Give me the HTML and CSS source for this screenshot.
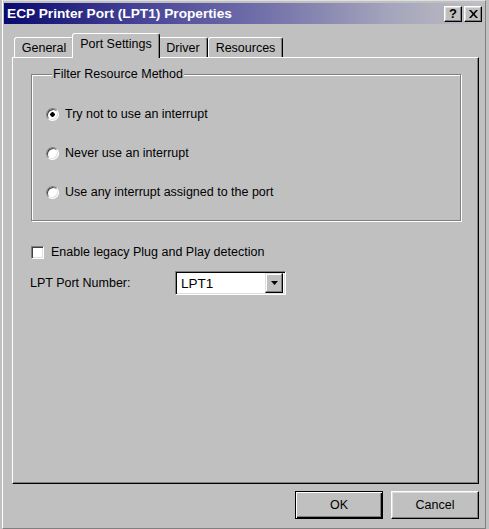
FILE: index.html
```html
<!DOCTYPE html>
<html lang="en">
<head>
    <meta charset="UTF-8">
    <title>ECP Printer Port (LPT1) Properties</title>
    <link rel="stylesheet" href="styles.css">
</head>
<body>
    <div class="window">
        <div class="titlebar">
            <span class="title">ECP Printer Port (LPT1) Properties</span>
            <div class="caption-buttons">
                <span class="caption-btn help">?</span>
                <span class="caption-btn">
                    <svg width="9" height="8" viewBox="0 0 9 8">
                        <path d="M0 0h2l2.5 2.8L7 0h2L5.5 4 9 8H7L4.5 5.2 2 8H0l3.5-4z" fill="#000"/>
                    </svg>
                </span>
            </div>
        </div>

        <div class="dialog">
            <div class="tabs">
                <div class="tab general">General</div>
                <div class="tab active">Port Settings</div>
                <div class="tab driver">Driver</div>
                <div class="tab resources">Resources</div>
            </div>

            <div class="panel">
                <fieldset class="group">
                    <legend>Filter Resource Method</legend>
                    <div class="options">
                        <div class="option"><span class="radio checked"></span>Try not to use an interrupt</div>
                        <div class="option"><span class="radio"></span>Never use an interrupt</div>
                        <div class="option"><span class="radio"></span>Use any interrupt assigned to the port</div>
                    </div>
                </fieldset>

                <div class="check-row"><span class="checkbox"></span>Enable legacy Plug and Play detection</div>

                <div class="port-row">
                    <span class="port-label">LPT Port Number:</span>
                    <div class="combo">
                        <span class="combo-value">LPT1</span>
                        <span class="combo-btn">
                            <svg width="7" height="4" viewBox="0 0 7 4"><path d="M0 0h7L3.5 4z" fill="#000"/></svg>
                        </span>
                    </div>
                </div>
            </div>

            <div class="actions">
                <span class="btn default">OK</span>
                <span class="btn">Cancel</span>
            </div>
        </div>
    </div>
</body>
</html>
```

FILE: styles.css
```css
* {
    margin: 0;
    padding: 0;
    box-sizing: border-box;
}

body {
    width: 489px;
    height: 529px;
    overflow: hidden;
    background: #c0c0c0;
    font-family: 'Liberation Sans', Arial, sans-serif;
    font-size: 12.5px;
    color: #000;
}

/* window frame */
.window {
    margin-left: 2px;
    width: 484px;
    height: 529px;
    padding: 2px 1px 0;
    border-top: 1px solid #dfdfdf;
    border-left: 1px solid #fff;
    border-right: 1px solid #808080;
    border-bottom: 1px solid #808080;
    background: #c0c0c0;
}

.titlebar {
    height: 21px;
    display: flex;
    align-items: center;
    justify-content: space-between;
    padding: 0 2px 0 3px;
    background: linear-gradient(to right, #0a0a6e 0%, #4a479a 30%, #7472aa 55%, #a4a4bc 80%, #bebec2 100%);
    color: #fff;
    font-size: 13.7px;
    font-weight: bold;
}

.caption-buttons {
    display: flex;
    gap: 2px;
}

.caption-btn {
    width: 18px;
    height: 16px;
    display: flex;
    align-items: center;
    justify-content: center;
    background: #c0c0c0;
    border: 1px solid;
    border-color: #fff #000 #000 #fff;
    box-shadow: inset -1px -1px #808080, inset 1px 1px #dfdfdf;
    color: #000;
}

.caption-btn.help {
    font-size: 13px;
    line-height: 1;
}

/* tabs */
.dialog {
    padding: 9px 5px 0 8px;
}

.tabs {
    display: flex;
    align-items: flex-end;
    height: 24px;
    padding-left: 2px;
}

.tab {
    height: 20px;
    display: flex;
    align-items: center;
    justify-content: center;
    border: 1px solid;
    border-bottom: none;
    border-color: #fff #000 transparent #fff;
    border-radius: 3px 3px 0 0;
    box-shadow: inset -1px 0 #808080;
    background: #c0c0c0;
}

.tab.general {
    width: 60px;
}

.tab.driver {
    width: 50px;
}

.tab.resources {
    width: 75px;
}

.tab.active {
    position: relative;
    z-index: 1;
    width: 88px;
    height: 25px;
    margin: 0 -2px -1px;
    padding-bottom: 4px;
}

.panel {
    height: 427px;
    border: 1px solid;
    border-color: #fff #000 #000 #fff;
    box-shadow: inset -1px -1px #808080;
    padding: 9px 16px 0 18px;
}

/* group box */
.group {
    width: 430px;
    border: 1px solid #808080;
    box-shadow: inset 1px 1px #fff, 1px 1px #fff;
    padding: 0 0 20px 14px;
}

.group legend {
    margin-left: 6px;
    padding: 0 1px;
    line-height: 15px;
    background: #c0c0c0;
}

.options {
    display: flex;
    flex-direction: column;
    gap: 23px;
    padding-top: 24px;
}

.option {
    display: flex;
    align-items: center;
    gap: 6px;
    height: 16px;
}

.radio {
    width: 13px;
    height: 13px;
    border-radius: 50%;
    background: #fff;
    border: 1px solid;
    border-color: #808080 #fff #fff #808080;
    box-shadow: inset 1px 1px #404040, inset -1px -1px #dfdfdf;
}

.radio.checked {
    background: radial-gradient(circle, #000 0 2px, #fff 2.5px);
}

/* checkbox and port row */
.check-row {
    display: flex;
    align-items: center;
    gap: 7px;
    margin-top: 23px;
    height: 16px;
}

.checkbox {
    width: 13px;
    height: 13px;
    background: #fff;
    border: 1px solid;
    border-color: #808080 #fff #fff #808080;
    box-shadow: inset 1px 1px #404040, inset -1px -1px #dfdfdf;
}

.port-row {
    display: flex;
    align-items: center;
    margin-top: 11px;
}

.port-label {
    width: 145px;
    margin-left: -1px;
}

.combo {
    width: 111px;
    height: 24px;
    display: flex;
    align-items: center;
    justify-content: space-between;
    background: #fff;
    border: 1px solid;
    border-color: #808080 #fff #fff #808080;
    box-shadow: inset 1px 1px #000, inset -1px -1px #dfdfdf;
    padding: 2px 2px 2px 5px;
    font-size: 13.5px;
}

.combo-btn {
    width: 18px;
    height: 20px;
    display: flex;
    align-items: center;
    justify-content: center;
    background: #c0c0c0;
    border: 1px solid;
    border-color: #dfdfdf #000 #000 #dfdfdf;
    box-shadow: inset -1px -1px #808080, inset 1px 1px #fff;
}

/* buttons */
.actions {
    display: flex;
    justify-content: flex-end;
    gap: 8px;
    margin-top: 7px;
}

.btn {
    width: 88px;
    height: 28px;
    display: flex;
    align-items: center;
    justify-content: center;
    background: #c0c0c0;
    border: 1px solid;
    border-color: #fff #000 #000 #fff;
    box-shadow: inset -1px -1px #808080, inset 1px 1px #dfdfdf;
}

.btn.default {
    border-color: #000;
    box-shadow: inset 1px 1px #fff, inset -1px -1px #000, inset -2px -2px #808080;
}
```
